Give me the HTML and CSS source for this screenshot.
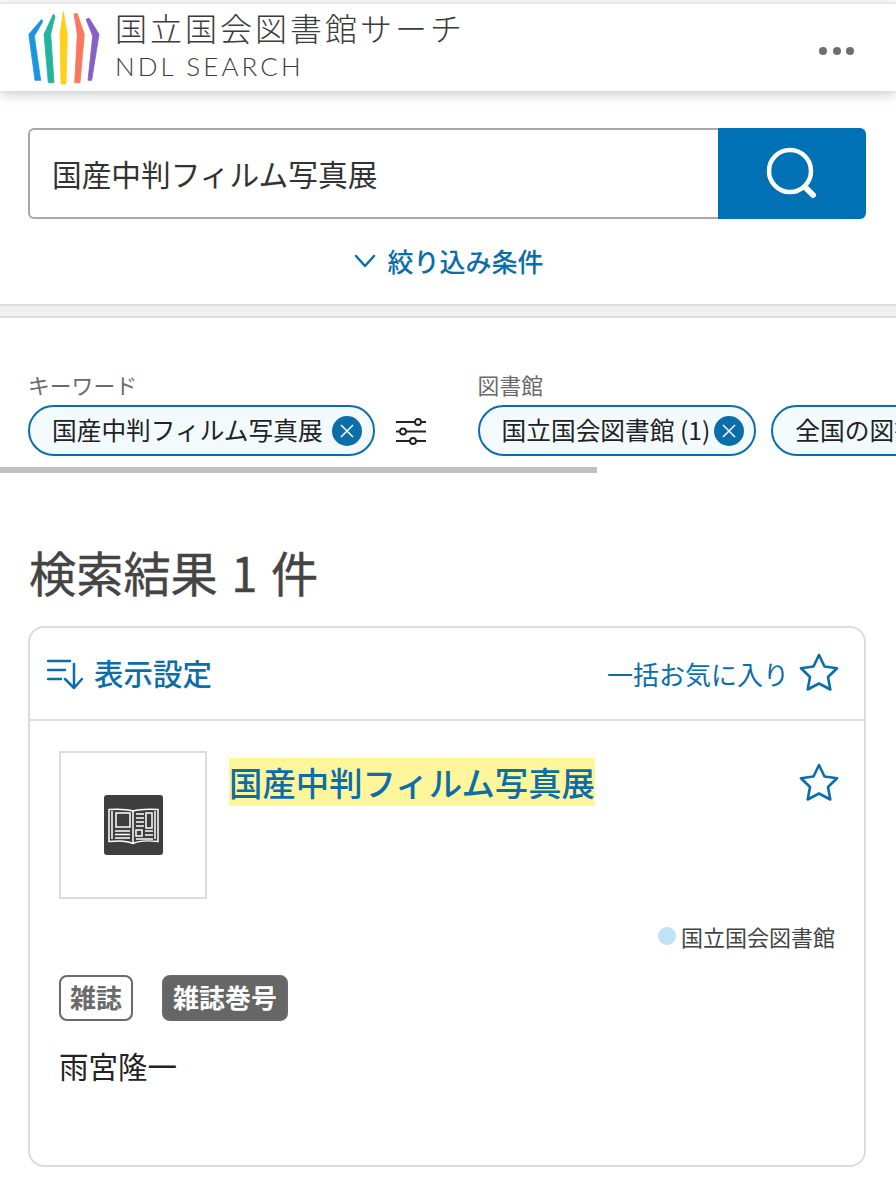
FILE: index.html
```html
<!DOCTYPE html>
<html lang="ja">
<head>
    <meta charset="UTF-8">
    <meta name="viewport" content="width=device-width, initial-scale=1.0">
    <title>国立国会図書館サーチ</title>
    <link rel="stylesheet" href="styles.css">
</head>
<body>
    <header class="site-header">
        <svg class="logo" viewBox="0 0 72 74" stroke-width="0.800" stroke-linejoin="round">
            <path d="M13.700 8.300 0.800 23.300 7 69.300H12.700L6.300 25 14.700 10.700Z" fill="#1b95e0" stroke="#1b95e0"/>
            <path d="M25.300 3.300 16 23.300 20.300 71.700H26L22.700 23.300 27 5Z" fill="#22b59c" stroke="#22b59c"/>
            <path d="M35.300 0.500 32 23.300 33 73H38L39.300 23.300Z" fill="#fdd020" stroke="#fdd020"/>
            <path d="M46 2.700H49.300L56.300 23.300 52 71.700H46.700L49.300 23.300Z" fill="#f9775c" stroke="#f9775c"/>
            <path d="M58 8.300 61.300 7.300 71 23.300 63.700 69.300H60L64.700 25Z" fill="#8461c4" stroke="#8461c4"/>
        </svg>
        <div class="brand">
            <div class="brand-ja">国立国会図書館サーチ</div>
            <div class="brand-en">NDL SEARCH</div>
        </div>
        <div class="more"><span></span><span></span><span></span></div>
    </header>

    <section class="search">
        <div class="search-box">
            <div class="search-input">国産中判フィルム写真展</div>
            <div class="search-button">
                <svg width="54" height="54" viewBox="0 0 54 54" fill="none" stroke="#fff">
                    <circle cx="24" cy="24" r="21" stroke-width="4.500"/>
                    <path d="M39 40 47 48" stroke-width="6" stroke-linecap="round"/>
                </svg>
            </div>
        </div>
        <div class="refine">
            <svg width="22" height="14" viewBox="0 0 22 14" fill="none" stroke="#0b6ea8" stroke-width="2.500" stroke-linecap="round" stroke-linejoin="round"><path d="M2 2 11 12 20 2"/></svg>
            <span>絞り込み条件</span>
        </div>
    </section>

    <div class="band"></div>

    <div class="filters">
        <div class="filter-group">
            <div class="filter-label">キーワード</div>
            <div class="filter-row">
                <div class="chip">
                    <span>国産中判フィルム写真展</span>
                    <svg class="chip-x" viewBox="0 0 30 30"><circle cx="15" cy="15" r="15" fill="#0b6ea8"/><path d="M9 9 21 21M21 9 9 21" stroke="#fff" stroke-width="1.500"/></svg>
                </div>
                <svg class="sliders" viewBox="0 0 32 28" fill="#fff" stroke="#222" stroke-width="1.800">
                    <path d="M1 5H31M1 14.500H31M1 24H31"/>
                    <circle cx="23" cy="5" r="3"/>
                    <circle cx="8" cy="14.500" r="3"/>
                    <circle cx="18" cy="24" r="3"/>
                </svg>
            </div>
        </div>
        <div class="filter-group">
            <div class="filter-label">図書館</div>
            <div class="filter-row">
                <div class="chip chip-tight">
                    <span>国立国会図書館 (1)</span>
                    <svg class="chip-x" viewBox="0 0 30 30"><circle cx="15" cy="15" r="15" fill="#0b6ea8"/><path d="M9 9 21 21M21 9 9 21" stroke="#fff" stroke-width="1.500"/></svg>
                </div>
                <div class="chip"><span>全国の図書館 (0)</span></div>
            </div>
        </div>
    </div>
    <div class="scrollbar"></div>

    <h1 class="result-count">検索結果 1 件</h1>

    <main class="card">
        <div class="card-head">
            <div class="display-setting">
                <svg width="36" height="32" viewBox="0 0 36 32" fill="none" stroke="#0b6ea8" stroke-width="2.500" stroke-linecap="round" stroke-linejoin="round">
                    <path d="M1 3H23M1 12H18M1 21H14M27 6V30M18 21 27 30 35 21"/>
                </svg>
                <span>表示設定</span>
            </div>
            <div class="bulk-fav">
                <span>一括お気に入り</span>
                <svg class="star" viewBox="0 0 40 38" fill="none" stroke="#0b6ea8" stroke-width="2.600" stroke-linejoin="round"><path d="M20 2 25.500 13.500 38 15.200 29 24 31.300 36.500 20 30.500 8.700 36.500 11 24 2 15.200 14.500 13.500Z"/></svg>
            </div>
        </div>
        <div class="card-body">
            <div class="item-top">
                <div class="thumb">
                    <svg width="59" height="60" viewBox="0 0 59 60">
                        <rect width="59" height="60" rx="3" fill="#3e3e3e"/>
                        <g fill="none" stroke="#fff" stroke-width="1.500">
                            <path d="M29 16C24 14.500 14 14 5 14.500V46.500C14 45.500 24 46 29 48.500 34 46 45 45.500 54 46.500V14.500C45 14 34 14.500 29 16Z"/>
                            <path d="M29 16V48M8 16V44M51 16V44"/>
                            <rect x="12" y="18" width="14" height="14"/>
                            <rect x="42" y="18" width="6" height="15"/>
                            <rect x="32" y="35" width="6" height="6"/>
                            <path d="M11 36H26M11 39.500H26M11 43H26M32 19H40M32 23H40M32 27H40M32 31H40M41 36H49M41 40H49M32 44H49"/>
                        </g>
                    </svg>
                </div>
                <div class="item-title"><mark>国産中判フィルム写真展</mark></div>
                <svg class="star" viewBox="0 0 40 38" fill="none" stroke="#0b6ea8" stroke-width="2.600" stroke-linejoin="round"><path d="M20 2 25.500 13.500 38 15.200 29 24 31.300 36.500 20 30.500 8.700 36.500 11 24 2 15.200 14.500 13.500Z"/></svg>
            </div>
            <div class="item-source"><span class="dot"></span>国立国会図書館</div>
            <div class="tags">
                <span class="tag">雑誌</span>
                <span class="tag tag-dark">雑誌巻号</span>
            </div>
            <div class="author">雨宮隆一</div>
        </div>
    </main>
</body>
</html>
```

FILE: styles.css
```css
* {
    box-sizing: border-box;
}

body {
    margin: 0;
    height: 1200px;
    overflow: hidden;
    background-color: #fff;
    color: #222;
    font-family: "Noto Sans CJK JP", "Noto Sans", sans-serif;
}

.site-header {
    display: flex;
    align-items: center;
    height: 89px;
    margin-top: 2px;
    padding: 0 42px 0 28px;
    border-top: 2px solid #e8e6f3;
    box-shadow: 0 3px 12px rgba(0, 0, 0, 0.22);
}

.logo {
    width: 72px;
    height: 74px;
    flex: none;
    overflow: visible;
}

.brand {
    margin-left: 15px;
    flex: 1;
    color: #3c3c3c;
}

.brand-ja {
    margin-top: -3px;
    font-size: 32px;
    font-weight: 300;
    line-height: 34px;
    letter-spacing: 3px;
}

.brand-en {
    margin-top: 7px;
    font-family: Lato, sans-serif;
    font-size: 26px;
    font-weight: 300;
    line-height: 31px;
    letter-spacing: 3.100px;
}

.more {
    display: flex;
    gap: 5.500px;
    margin-top: 6px;
}

.more span {
    width: 8px;
    height: 8px;
    border-radius: 50%;
    background-color: #6e6e6e;
}

.search {
    height: 213px;
    padding: 37px 30px 0 28px;
}

.search-box {
    display: flex;
    height: 91px;
}

.search-input {
    flex: 1;
    display: flex;
    align-items: center;
    padding: 0 0 1px 22px;
    font-size: 29.700px;
    color: #333;
    border: 2px solid #a8a8a8;
    border-right: none;
    border-radius: 6px 0 0 6px;
}

.search-button {
    display: flex;
    align-items: center;
    justify-content: center;
    width: 148px;
    padding-left: 2px;
    background-color: #0071b5;
    border-radius: 0 6px 6px 0;
}

.refine {
    display: flex;
    align-items: center;
    justify-content: center;
    gap: 11px;
    margin-top: 22px;
    padding-left: 4px;
    color: #0b6ea8;
    font-size: 26px;
    font-weight: 500;
    line-height: 40px;
}

.band {
    height: 14px;
    background-color: #f0f0f0;
    border-top: 2px solid #dedede;
    border-bottom: 2px solid #dedede;
}

.filters {
    display: flex;
    gap: 51px;
    margin-top: 47px;
    padding: 6px 0 0 28px;
    overflow: hidden;
    white-space: nowrap;
}

.filter-group {
    flex: none;
}

.filter-label {
    color: #6a6a6a;
    font-size: 21.800px;
    line-height: 28px;
}

.filter-row {
    display: flex;
    align-items: center;
    gap: 20px;
    margin-top: 6px;
}

.filter-group + .filter-group .filter-row {
    gap: 15px;
}

.chip {
    display: flex;
    align-items: center;
    gap: 9px;
    height: 51px;
    padding: 0 11px 0 22px;
    background-color: #f3fafe;
    border: 2px solid #0b6ea8;
    border-radius: 26px;
    font-size: 24.700px;
    color: #222;
}

.chip span {
    padding-bottom: 3px;
}

.chip-tight {
    gap: 4px;
    padding-right: 10px;
}

.chip-x {
    width: 30px;
    height: 30px;
    flex: none;
}

.sliders {
    width: 32px;
    height: 28px;
    flex: none;
}

.scrollbar {
    width: 597px;
    height: 6px;
    margin-top: 11px;
    background-color: #c0c0c0;
}

.result-count {
    margin: 67px 0 0 29px;
    color: #444;
    font-size: 47.200px;
    font-weight: 400;
    line-height: 64px;
    word-spacing: 3px;
    -webkit-text-stroke: 0.4px #444;
}

.card {
    height: 541px;
    margin: 22px 30px 0 28px;
    border: 2px solid #dcdcdc;
    border-radius: 16px;
}

.card-head {
    display: flex;
    align-items: center;
    justify-content: space-between;
    height: 93px;
    padding: 0 25px 0 17px;
    border-bottom: 2px solid #dcdcdc;
    color: #0b6ea8;
}

.display-setting {
    display: flex;
    align-items: center;
    gap: 11px;
    font-size: 29.500px;
    font-weight: 500;
}

.display-setting span {
    padding-bottom: 4px;
}

.bulk-fav {
    display: flex;
    align-items: center;
    gap: 10px;
    font-size: 26px;
}

.bulk-fav .star {
    margin-bottom: 4px;
}

.star {
    width: 40px;
    height: 38px;
    flex: none;
}

.card-body {
    padding: 30px 25px 0 29px;
}

.item-top {
    display: flex;
    align-items: flex-start;
}

.thumb {
    display: flex;
    align-items: center;
    justify-content: center;
    width: 148px;
    height: 148px;
    flex: none;
    border: 2px solid #dcdcdc;
}

.item-title {
    flex: 1;
    margin: 7px 0 0 22px;
    color: #0b6ea8;
    font-size: 33.400px;
    font-weight: 500;
    line-height: 48px;
}

.item-title mark {
    display: inline-block;
    background-color: #fff59b;
    color: inherit;
}

.item-top .star {
    margin-top: 12px;
}

.item-source {
    display: flex;
    align-items: center;
    justify-content: flex-end;
    gap: 5px;
    margin-top: 21px;
    padding-right: 4px;
    color: #444;
    font-size: 22px;
    line-height: 32px;
}

.dot {
    width: 18px;
    height: 18px;
    border-radius: 50%;
    background-color: #bfe2f5;
}

.tags {
    display: flex;
    gap: 29px;
    margin-top: 23px;
}

.tag {
    height: 46px;
    padding: 0 9px;
    border: 2px solid #6a6a6a;
    border-radius: 8px;
    color: #6a6a6a;
    font-size: 26px;
    font-weight: 700;
    line-height: 40px;
}

.tag-dark {
    background-color: #666;
    color: #fff;
}

.author {
    margin-top: 22px;
    color: #222;
    font-size: 29.500px;
    line-height: 44px;
}
```
